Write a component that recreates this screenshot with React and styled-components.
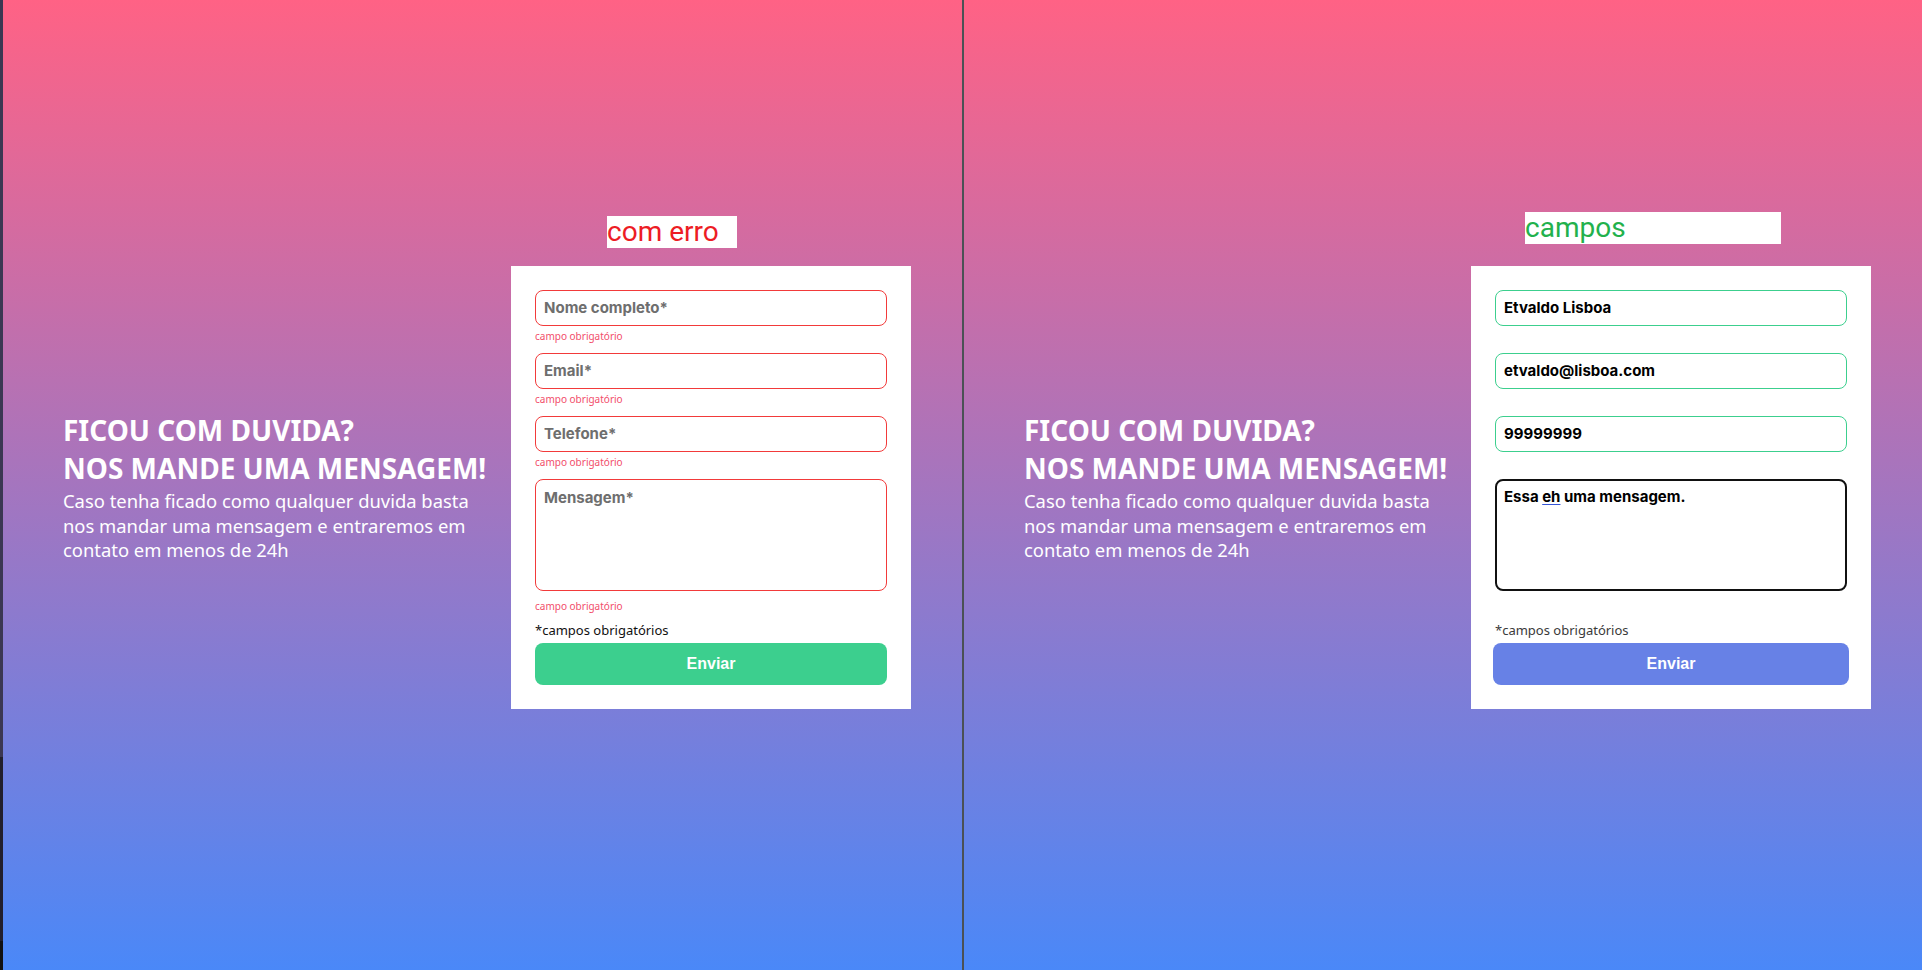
import React from "react";
import styled, { createGlobalStyle, css } from "styled-components";

const GlobalStyle = createGlobalStyle`
  html, body {
    margin: 0;
    padding: 0;
  }
  body {
    font-family: "Noto Sans", "Open Sans", sans-serif;
    overflow: hidden;
  }
  * {
    box-sizing: border-box;
  }
`;

const Screen = styled.div`
  display: flex;
  width: 1922px;
  height: 970px;
`;

const EdgeStrip = styled.div`
  flex: 0 0 3px;
  background: linear-gradient(
    to bottom,
    #3b3752 0%,
    #3b3752 78%,
    #221f2c 78%,
    #221f2c 97%,
    #111 97%
  );
`;

const Divider = styled.div`
  flex: 0 0 2px;
  background: #4b5155;
`;

const Page = styled.section`
  flex: 0 0 ${(props) => props.$width}px;
  display: flex;
  align-items: center;
  justify-content: space-between;
  padding: 4px 51px 0 60px;
  background: linear-gradient(180deg, #ff6285 0%, #4a88f8 100%);
`;

const Intro = styled.div`
  width: 440px;
  color: #fff;
`;

const Title = styled.h2`
  margin: 0 0 2px;
  font-size: 28px;
  line-height: 38px;
  font-weight: 700;
  white-space: nowrap;
`;

const Lead = styled.p`
  margin: 0;
  width: 425px;
  font-size: 18.4px;
  line-height: 24.5px;
`;

const Card = styled.form`
  position: relative;
  flex: 0 0 400px;
  display: flex;
  flex-direction: column;
  padding: 24px;
  background: #fff;
`;

const Note = styled.span`
  position: absolute;
  top: ${(props) => props.$top}px;
  left: ${(props) => props.$left}px;
  width: ${(props) => props.$width}px;
  height: 32px;
  background: #fff;
  font-family: Roboto, "Liberation Sans", sans-serif;
  font-size: 28px;
  line-height: 32px;
  color: ${(props) => (props.$tone === "error" ? "#ed1c24" : "#22b14c")};
`;

const fieldBorder = css`
  width: 100%;
  border-radius: 8px;
  outline: none;
  font-family: Inter, "Liberation Sans", sans-serif;
  font-size: 15px;
  font-weight: 700;
  color: #000;
  background: #fff;
  ${(props) =>
    props.$state === "focus"
      ? `border: 2px solid #111; padding: 7px;`
      : `border: 1px solid ${props.$state === "error" ? "#f23a3a" : "#3ccf8e"};
         padding: 0 8px;`}
  &::placeholder {
    color: #6e6e6e;
    opacity: 1;
  }
`;

const Input = styled.input`
  ${fieldBorder}
  display: block;
  height: 36px;
`;

const TextArea = styled.textarea`
  ${fieldBorder}
  display: block;
  height: 112px;
  margin-bottom: 5px;
  resize: none;
  padding: 8px;
`;

const MessageBox = styled.div`
  ${fieldBorder}
  height: 112px;
  margin-bottom: 5px;
  line-height: 18px;
`;

const Typo = styled.span`
  text-decoration: underline;
  text-decoration-color: #3555d6;
  text-underline-offset: 2px;
`;

const ErrorRow = styled.div`
  height: 27px;
  padding-top: 3px;
  font-size: 10px;
  line-height: 14px;
  color: #f24e6b;
`;

const Required = styled.span`
  margin-top: -2px;
  font-size: 13px;
  line-height: 18px;
  color: ${(props) => (props.$muted ? "#3a3a3a" : "#111")};
`;

const SendButton = styled.button`
  height: 42px;
  margin: 4px ${(props) => (props.$wide ? "-2px" : "0")} 0;
  border: none;
  border-radius: 8px;
  background: ${(props) => props.$color};
  color: #fff;
  font-family: "Liberation Sans", Arial, sans-serif;
  font-size: 16px;
  font-weight: 700;
  cursor: pointer;
`;

const pages = [
  {
    width: 959,
    note: { text: "com erro", tone: "error", top: -50, left: 96, width: 130 },
    fields: [
      { placeholder: "Nome completo*", state: "error" },
      { placeholder: "Email*", state: "error" },
      { placeholder: "Telefone*", state: "error" },
    ],
    message: { placeholder: "Mensagem*", state: "error" },
    button: "#3ccf8e",
  },
  {
    width: 958,
    note: { text: "campos", tone: "ok", top: -54, left: 54, width: 256 },
    fields: [
      { value: "Etvaldo Lisboa", state: "valid" },
      { value: "etvaldo@lisboa.com", state: "valid" },
      { value: "99999999", state: "valid" },
    ],
    message: { state: "focus", filled: true },
    button: "#6781e6",
    wide: true,
    muted: true,
  },
];

function ContactPage({ page }) {
  const hasError = (state) => state === "error";

  return (
    <Page $width={page.width}>
      <Intro>
        <Title>
          FICOU COM DUVIDA?
          <br />
          NOS MANDE UMA MENSAGEM!
        </Title>
        <Lead>
          Caso tenha ficado como qualquer duvida basta nos mandar uma mensagem e
          entraremos em contato em menos de 24h
        </Lead>
      </Intro>
      <Card onSubmit={(e) => e.preventDefault()}>
        <Note
          $tone={page.note.tone}
          $top={page.note.top}
          $left={page.note.left}
          $width={page.note.width}
        >
          {page.note.text}
        </Note>
        {page.fields.map((field, i) => (
          <div key={i}>
            <Input
              $state={field.state}
              placeholder={field.placeholder}
              defaultValue={field.value}
            />
            <ErrorRow>{hasError(field.state) && "campo obrigatório"}</ErrorRow>
          </div>
        ))}
        {page.message.filled ? (
          <MessageBox $state={page.message.state}>
            Essa <Typo>eh</Typo> uma mensagem.
          </MessageBox>
        ) : (
          <TextArea
            $state={page.message.state}
            placeholder={page.message.placeholder}
          />
        )}
        <ErrorRow>
          {hasError(page.message.state) && "campo obrigatório"}
        </ErrorRow>
        <Required $muted={page.muted}>*campos obrigatórios</Required>
        <SendButton $color={page.button} $wide={page.wide}>
          Enviar
        </SendButton>
      </Card>
    </Page>
  );
}

export default function App() {
  return (
    <>
      <GlobalStyle />
      <Screen>
        <EdgeStrip />
        <ContactPage page={pages[0]} />
        <Divider />
        <ContactPage page={pages[1]} />
      </Screen>
    </>
  );
}
